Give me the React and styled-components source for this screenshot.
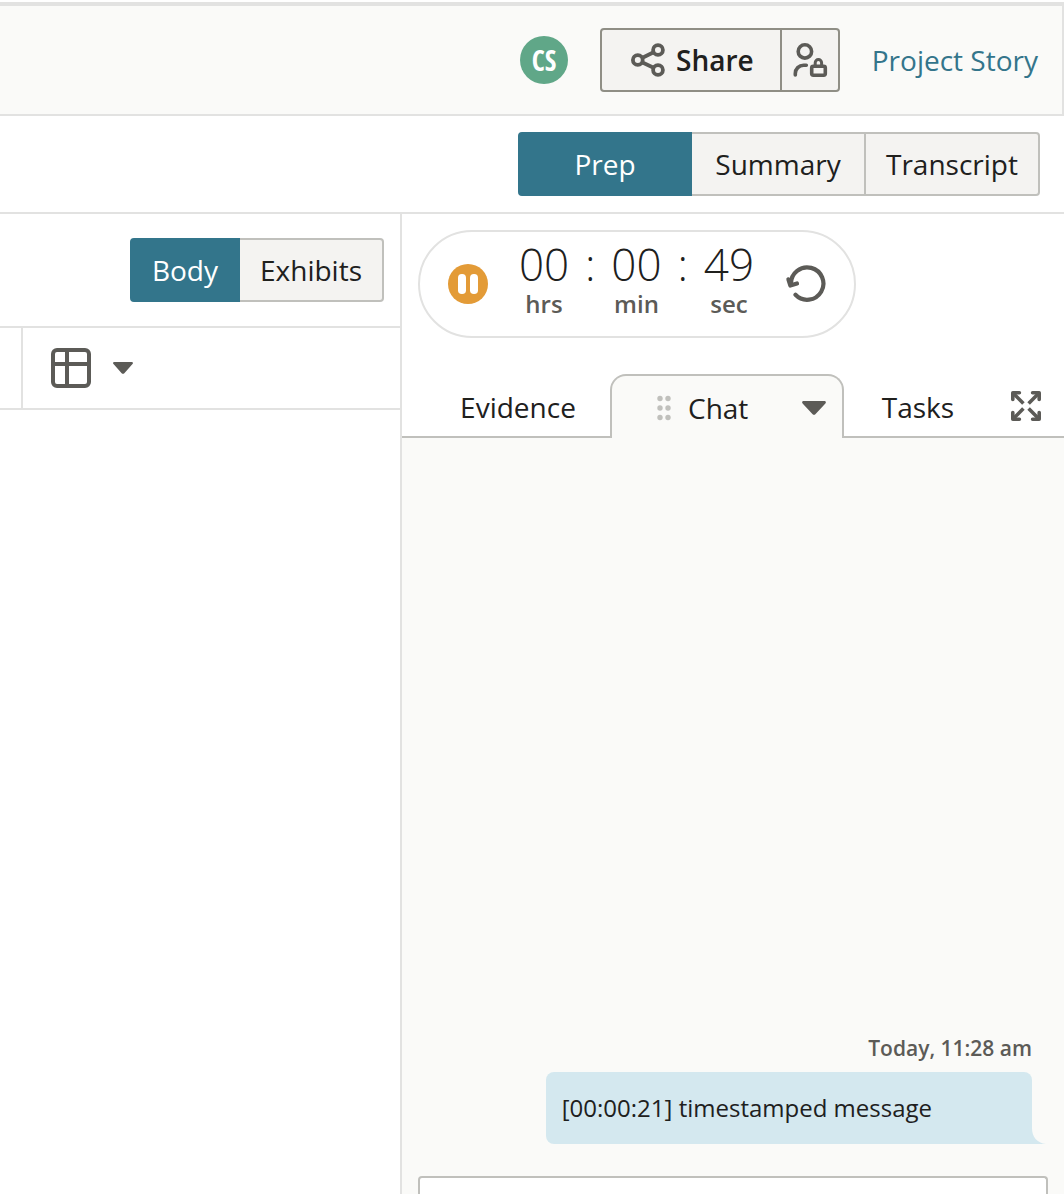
import React from "react";
import styled, { createGlobalStyle } from "styled-components";

const c = {
  text: "#20201d",
  muted: "#5c5b57",
  teal: "#33758b",
  line: "#e2e2e1",
  control: "#c0c0bc",
  strong: "#8f8e85",
  fill: "#f4f3f1",
  panel: "#fafaf8",
};

const Global = createGlobalStyle`
  *, *::before, *::after { box-sizing: border-box; }
  body { margin: 0; background: #fff; }
  button, textarea { font: inherit; color: inherit; }
  button { cursor: pointer; }
  svg { display: block; flex: none; }
`;

const Page = styled.div`
  display: flex;
  flex-direction: column;
  height: 100vh;
  overflow: hidden;
  color: ${c.text};
  font: 400 28px/38px "Open Sans", "Noto Sans", sans-serif;
`;

const Header = styled.header`
  display: flex;
  align-items: center;
  justify-content: flex-end;
  gap: 32px;
  margin-top: 2px;
  padding: 22px 24px;
  background: ${c.panel};
  border: solid ${c.line};
  border-width: 4px 2px 2px 0;
`;

const Avatar = styled.div`
  display: grid;
  place-items: center;
  width: 48px;
  height: 48px;
  border-radius: 50%;
  background: #60a788;
  color: #fff;
  font: 700 28px/38px "Open Sans Condensed", "Liberation Sans Narrow", "Open Sans", sans-serif;
`;

const ButtonGroup = styled.div`
  display: flex;
`;

const HeaderButton = styled.button`
  display: flex;
  align-items: center;
  justify-content: center;
  gap: 11px;
  height: 64px;
  padding: ${(p) => (p.$compact ? "0 10px" : "0 26px 0 29px")};
  border: 2px solid ${c.strong};
  background: ${c.fill};
  color: ${c.muted};
  &:first-child { border-radius: 4px 0 0 4px; }
  &:last-child { border-left: 0; border-radius: 0 4px 4px 0; }
`;

const ButtonLabel = styled.span`
  color: ${c.text};
  font-weight: 600;
`;

const StoryLink = styled.a`
  color: ${c.teal};
  text-decoration: none;
`;

const ModeBar = styled.nav`
  display: flex;
  justify-content: flex-end;
  padding: 16px 24px;
  border-bottom: 2px solid ${c.line};
`;

const Segment = styled.button`
  height: 64px;
  min-width: ${(p) => p.$width || "0"};
  padding: 0 20px;
  border: 2px solid ${(p) => (p.$active ? c.teal : c.control)};
  border-left-width: ${(p) => (p.$active ? "2px" : "0")};
  background: ${(p) => (p.$active ? c.teal : c.fill)};
  color: ${(p) => (p.$active ? "#fff" : c.text)};
  &:first-child { border-radius: 4px 0 0 4px; }
  &:last-child { border-radius: 0 4px 4px 0; }
`;

const Workspace = styled.div`
  display: flex;
  flex: 1;
  min-height: 0;
`;

const Outline = styled.main`
  flex: 1 1 0;
  border-right: 2px solid ${c.line};
`;

const OutlineHead = styled.div`
  display: flex;
  justify-content: flex-end;
  padding: 24px 16px;
  border-bottom: 2px solid ${c.line};
`;

const Toolbar = styled.div`
  display: flex;
  height: 82px;
  padding-left: 21px;
  border-bottom: 2px solid ${c.line};
`;

const TableMenu = styled.button`
  display: flex;
  align-items: center;
  gap: 22px;
  padding: 0 28px;
  border: 0;
  border-left: 2px solid ${c.line};
  background: none;
  color: ${c.muted};
`;

const Side = styled.aside`
  display: flex;
  flex-direction: column;
  flex: 0 1 662px;
`;

const Timer = styled.section`
  display: flex;
  align-items: center;
  align-self: flex-start;
  gap: 30px;
  height: 108px;
  margin: 16px 16px 36px;
  padding: 0 27px 0 28px;
  border: 2px solid ${c.line};
  border-radius: 54px;
`;

const IconButton = styled.button`
  padding: 0;
  border: 0;
  background: none;
  color: ${c.muted};
`;

const Clock = styled.div`
  display: flex;
  gap: 15px;
  padding-bottom: 6px;
`;

const ClockUnit = styled.div`
  display: flex;
  flex-direction: column;
  align-items: center;
  width: 52px;
`;

const Digits = styled.span`
  font-size: 44px;
  font-weight: 300;
  line-height: 46px;
`;

const UnitName = styled.span`
  color: ${c.muted};
  font-size: 24px;
  font-weight: 600;
  line-height: 34px;
`;

const Tabs = styled.div`
  display: flex;
  height: 64px;
  padding-left: 24px;
  background: linear-gradient(${c.control}, ${c.control}) bottom / 100% 2px no-repeat;
`;

const Tab = styled.button`
  padding: 2px 0 0;
  width: ${(p) => p.$width};
  border: 0;
  background: none;
`;

const ActiveTab = styled.div`
  display: flex;
  align-items: center;
  width: 234px;
  padding: 2px 16px 0 45px;
  border: 2px solid ${c.control};
  border-bottom: 0;
  border-radius: 16px 16px 0 0;
  background: ${c.panel};
  color: ${c.muted};
`;

const TabName = styled.button`
  flex: 1;
  padding: 0 0 0 17px;
  border: 0;
  background: none;
  color: ${c.text};
  text-align: left;
`;

const ExpandButton = styled(IconButton)`
  margin-left: auto;
  padding-right: 23px;
`;

const Chat = styled.section`
  display: flex;
  flex: 1;
  flex-direction: column;
  justify-content: flex-end;
  align-items: flex-end;
  padding: 0 16px;
  background: ${c.panel};
`;

const Stamp = styled.time`
  margin: 0 16px 8px;
  color: ${c.muted};
  font-size: 21px;
  font-weight: 600;
  line-height: 32px;
`;

const Bubble = styled.p`
  position: relative;
  margin: 0 16px 32px;
  padding: 19px 100px 19px 16px;
  border-radius: 8px 8px 0 8px;
  background: #d4e8ef;
  font-size: 24px;
  line-height: 34px;
`;

const Tail = styled.svg`
  position: absolute;
  left: 100%;
  bottom: 0;
`;

const Composer = styled.textarea`
  width: 100%;
  height: 18px;
  padding: 0 16px;
  border: 2px solid ${c.control};
  border-bottom: 0;
  border-radius: 4px 4px 0 0;
  background: #fff;
  font-size: 24px;
  resize: none;
  overflow: hidden;
`;

const ShareIcon = () => (
  <svg width="34" height="34" viewBox="0 0 34 34" fill="none" stroke="currentColor" strokeWidth="3.8" aria-hidden="true">
    <circle cx="6.8" cy="17" r="4.9" />
    <circle cx="27" cy="7" r="4.9" />
    <circle cx="27" cy="27" r="4.9" />
    <path d="M11 15 22.6 9.2M11 19.2 22.6 24.8" />
  </svg>
);

const UserLockIcon = () => (
  <svg width="36" height="36" viewBox="0 0 36 36" fill="none" stroke="currentColor" strokeWidth="3.6" strokeLinecap="round" strokeLinejoin="round" aria-hidden="true">
    <circle cx="12.9" cy="9.4" r="6.7" />
    <path d="M3.3 33V31.500a8.300 8.300 0 0 1 8.300-8.300H14.300" />
    <rect x="19.700" y="24.200" width="13.600" height="9" rx="1.600" />
    <path d="M23.200 24v-3.200a3.200 3.200 0 0 1 6.400 0v3.200" strokeWidth="3" />
  </svg>
);

const TableIcon = () => (
  <svg width="40" height="40" viewBox="0 0 40 40" fill="none" stroke="currentColor" strokeWidth="4" aria-hidden="true">
    <rect x="2" y="2" width="36" height="36" rx="4" />
    <path d="M16 2v36M2 16h36" />
  </svg>
);

const Caret = ({ width, height }) => (
  <svg width={width} height={height} viewBox="0 0 24 14" preserveAspectRatio="none" fill="currentColor" aria-hidden="true">
    <path d="M1.6 0h20.8c1.4 0 2 1.5 1 2.4L13.6 13a2.2 2.2 0 0 1-3.2 0L.6 2.4C-.4 1.5.2 0 1.6 0Z" />
  </svg>
);

const PauseIcon = () => (
  <svg width="40" height="40" viewBox="0 0 40 40" aria-hidden="true">
    <circle cx="20" cy="20" r="20" fill="#e39b37" />
    <rect x="10" y="10" width="8" height="20" rx="3.8" fill="#fff" />
    <rect x="22" y="10" width="8" height="20" rx="3.8" fill="#fff" />
  </svg>
);

const ResetIcon = () => (
  <svg width="42" height="40" viewBox="0 0 42 40" fill="none" stroke="currentColor" strokeWidth="4.2" strokeLinecap="round" strokeLinejoin="round" aria-hidden="true">
    <path d="M10.500 30.800A16.200 16.200 0 1 0 6 20" />
    <path d="m3.400 15.300 1.900 6.200 6.700-2" />
  </svg>
);

const DragDots = () => (
  <svg width="14" height="26" viewBox="0 0 14 26" fill={c.control} aria-hidden="true">
    {[3.5, 13, 22.5].map((y) => (
      <React.Fragment key={y}>
        <circle cx="3" cy={y} r="2.7" />
        <circle cx="11" cy={y} r="2.7" />
      </React.Fragment>
    ))}
  </svg>
);

const ExpandIcon = () => (
  <svg width="30" height="30" viewBox="0 0 30 30" fill="none" stroke="currentColor" strokeWidth="3.6" strokeLinecap="round" strokeLinejoin="round" aria-hidden="true">
    <path d="M1.8 8.4V1.8h6.6M21.6 1.8h6.6v6.6M28.2 21.6v6.6h-6.6M8.4 28.2H1.8v-6.6" />
    <path d="m2 2 10.4 10.4M28 2 17.6 12.4M28 28 17.6 17.6M2 28l10.4-10.4" strokeLinecap="butt" />
  </svg>
);

const time = [
  ["00", "hrs"],
  ["00", "min"],
  ["49", "sec"],
];

export default function App() {
  return (
    <Page>
      <Global />
      <Header>
        <Avatar>CS</Avatar>
        <ButtonGroup>
          <HeaderButton type="button">
            <ShareIcon />
            <ButtonLabel>Share</ButtonLabel>
          </HeaderButton>
          <HeaderButton type="button" $compact aria-label="Permissions">
            <UserLockIcon />
          </HeaderButton>
        </ButtonGroup>
        <StoryLink href="#story">Project Story</StoryLink>
      </Header>

      <ModeBar>
        <Segment type="button" $active $width="174px">Prep</Segment>
        <Segment type="button" $width="174px">Summary</Segment>
        <Segment type="button" $width="174px">Transcript</Segment>
      </ModeBar>

      <Workspace>
        <Outline>
          <OutlineHead>
            <Segment type="button" $active $width="110px">Body</Segment>
            <Segment type="button" $width="144px">Exhibits</Segment>
          </OutlineHead>
          <Toolbar>
            <TableMenu type="button" aria-label="Table">
              <TableIcon />
              <Caret width="20" height="12" />
            </TableMenu>
          </Toolbar>
        </Outline>

        <Side>
          <Timer>
            <IconButton type="button" aria-label="Pause"><PauseIcon /></IconButton>
            <Clock>
              {time.map(([value, unit], i) => (
                <React.Fragment key={unit}>
                  {i > 0 && <Digits>:</Digits>}
                  <ClockUnit>
                    <Digits>{value}</Digits>
                    <UnitName>{unit}</UnitName>
                  </ClockUnit>
                </React.Fragment>
              ))}
            </Clock>
            <IconButton type="button" aria-label="Reset"><ResetIcon /></IconButton>
          </Timer>

          <Tabs>
            <Tab type="button" $width="184px">Evidence</Tab>
            <ActiveTab>
              <DragDots />
              <TabName type="button">Chat</TabName>
              <IconButton type="button" aria-label="Chat options"><Caret width="24" height="14" /></IconButton>
            </ActiveTab>
            <Tab type="button" $width="148px">Tasks</Tab>
            <ExpandButton type="button" aria-label="Expand"><ExpandIcon /></ExpandButton>
          </Tabs>

          <Chat>
            <Stamp>Today, 11:28 am</Stamp>
            <Bubble>
              [00:00:21] timestamped message
              <Tail width="14" height="16" viewBox="0 0 14 16" fill="#d4e8ef" aria-hidden="true">
                <path d="M0 0c0 9 5 15 14 16H0Z" />
              </Tail>
            </Bubble>
            <Composer aria-label="Message" />
          </Chat>
        </Side>
      </Workspace>
    </Page>
  );
}
